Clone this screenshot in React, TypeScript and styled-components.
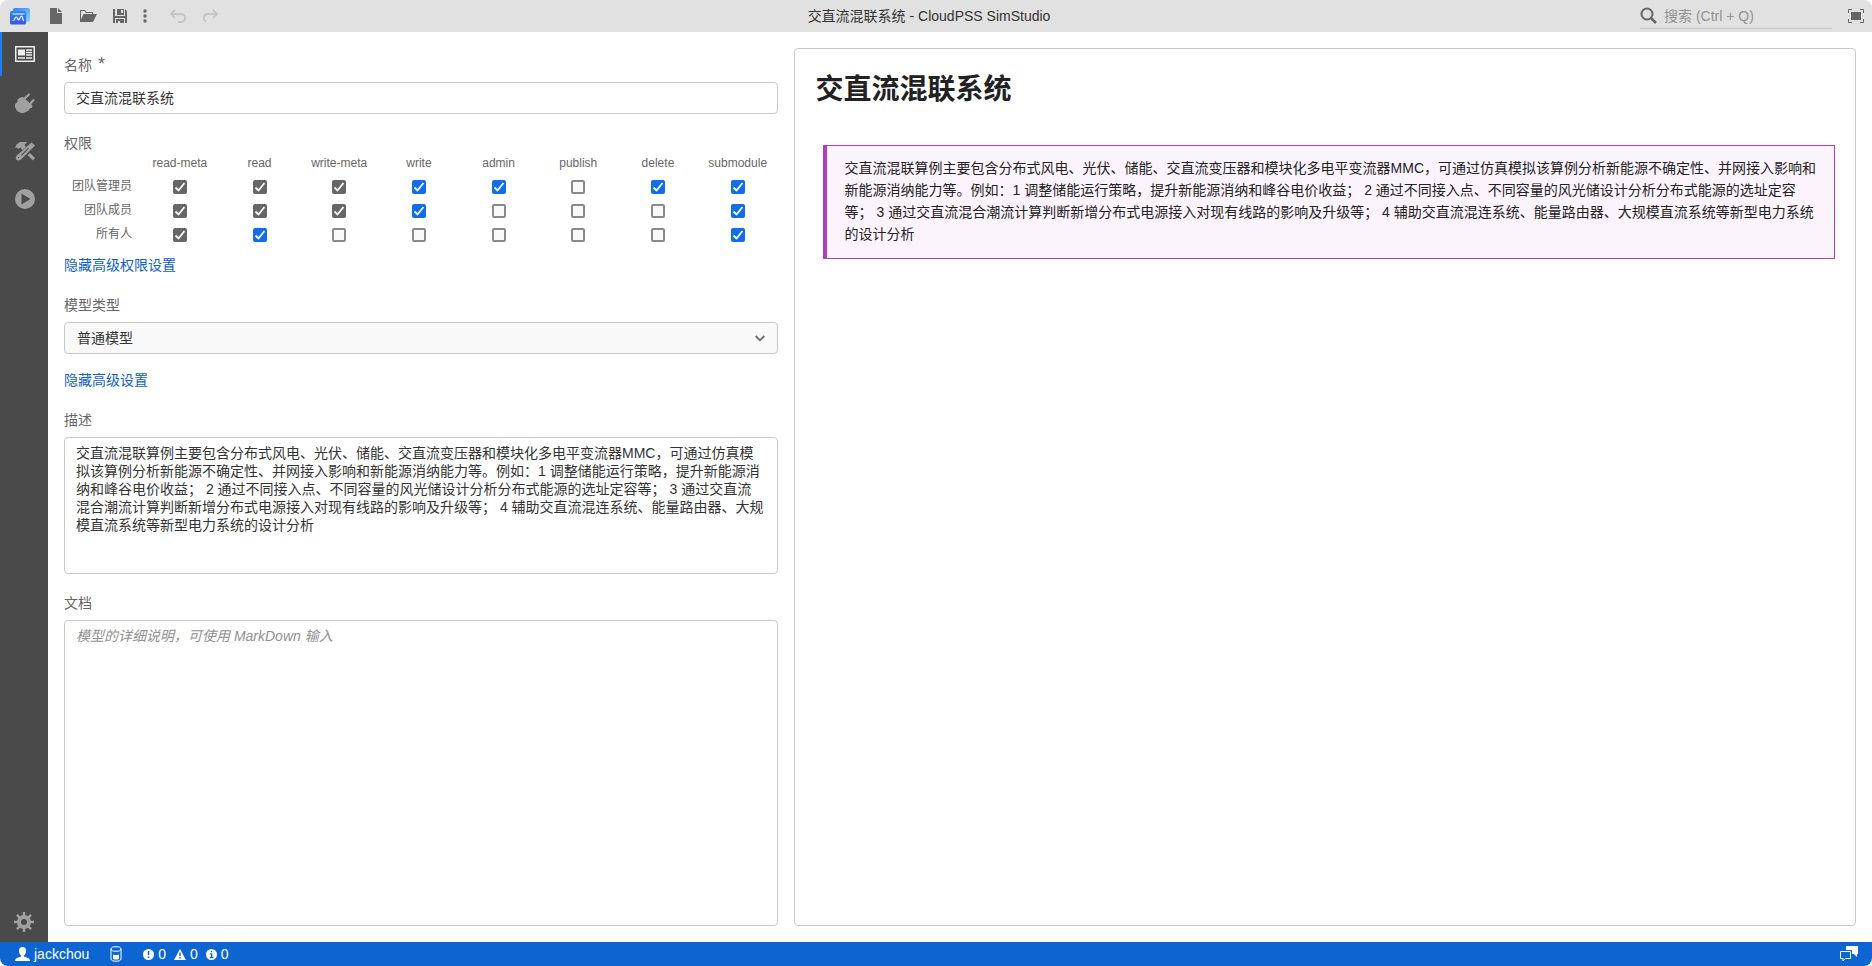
import React, { useState } from "react";
import styled, { createGlobalStyle } from "styled-components";

const GlobalStyle = createGlobalStyle`
  *, *::before, *::after { box-sizing: border-box; }
  html, body, #root { height: 100%; }
  body {
    margin: 0;
    background: #fff;
    color: #333;
    font-family: "Liberation Sans", "Noto Sans CJK SC", sans-serif;
    font-size: 14px;
    line-height: 20px;
  }
  button, input, select, textarea { font: inherit; color: inherit; margin: 0; }
  svg { display: block; }
`;

const Window = styled.div`
  display: flex;
  flex-direction: column;
  min-height: 100%;
  border-radius: 8px;
  overflow: hidden;
`;

const TitleBar = styled.header`
  display: grid;
  grid-template-columns: 1fr auto 1fr;
  align-items: center;
  height: 32px;
  padding: 0 8px 0 10px;
  background: #e1e1e1;
  color: #666;
`;

const Toolbar = styled.div`
  display: flex;
  align-items: center;
`;

const ToolButton = styled.button<{ $narrow?: boolean }>`
  display: flex;
  align-items: center;
  justify-content: center;
  width: ${(p) => (p.$narrow ? 18 : 32)}px;
  height: 32px;
  padding: 0;
  border: 0;
  background: none;
  color: #666;
  &:disabled { color: #c4c4c4; }
`;

const AppLogo = styled.div`
  margin-right: 10px;
`;

const UndoGroup = styled.div`
  display: flex;
  margin-left: 8px;
`;

const WindowTitle = styled.h1`
  margin: 0 16px 0 0;
  color: #333;
  font-size: 14px;
  font-weight: 400;
`;

const TitleRight = styled.div`
  display: flex;
  align-items: center;
  justify-content: flex-end;
  gap: 16px;
`;

const SearchBox = styled.label`
  display: flex;
  align-items: center;
  gap: 7px;
  width: 192px;
  height: 26px;
  border-bottom: 1px solid #c8c8c8;
`;

const SearchInput = styled.input`
  flex: 1;
  min-width: 0;
  padding: 0;
  border: 0;
  outline: 0;
  background: none;
  &::placeholder { color: #919191; opacity: 1; }
`;

const PlainButton = styled.button`
  padding: 0;
  border: 0;
  background: none;
`;

const Body = styled.div`
  display: flex;
  flex: 1;
`;

const SideBar = styled.nav`
  display: flex;
  flex-direction: column;
  width: 48px;
  background: #4a4a4a;
`;

const SideButton = styled.button<{ $active?: boolean }>`
  display: flex;
  align-items: center;
  justify-content: center;
  height: 44px;
  margin-bottom: ${(p) => (p.$active ? 5 : 4)}px;
  padding: 0;
  border: 0;
  border-left: 2px solid ${(p) => (p.$active ? "#1a7cf0" : "transparent")};
  background: none;
  color: ${(p) => (p.$active ? "#eee" : "#a0a0a0")};
`;

const SettingsButton = styled.button`
  display: flex;
  align-items: center;
  justify-content: center;
  height: 40px;
  margin-top: auto;
  padding: 0;
  border: 0;
  background: none;
  color: #a0a0a0;
`;

const Main = styled.main`
  display: flex;
  flex: 1;
  min-width: 0;
`;

const Form = styled.form`
  display: flex;
  flex-direction: column;
  gap: 12px;
  width: 40%;
  padding: 16px 0 16px 16px;
`;

const Field = styled.div<{ $grow?: boolean }>`
  display: flex;
  flex-direction: column;
  flex: ${(p) => (p.$grow ? "1" : "none")};
`;

const Label = styled.label`
  padding: 7px 0;
  color: #666;
`;

const GroupLabel = styled.div`
  padding-top: 7px;
  color: #666;
`;

const Required = styled.span`
  margin-left: 6px;
  font-size: 18px;
  line-height: 16px;
`;

const TextInput = styled.input`
  height: 32px;
  padding: 0 11px 3px;
  border: 1px solid #c8c8c8;
  border-radius: 4px;
  background: #fff;
`;

const TextArea = styled.textarea<{ $grow?: boolean }>`
  ${(p) => (p.$grow ? "flex: 1;" : "height: 137px;")}
  padding: 6px 13px 6px 11px;
  border: 1px solid #c8c8c8;
  border-radius: 4px;
  background: #fff;
  line-height: 18px;
  resize: none;
  &::placeholder { color: #919191; font-style: italic; opacity: 1; }
`;

const SelectWrap = styled.div`
  display: grid;
  align-items: center;
  & > * { grid-area: 1 / 1; }
  & > svg { justify-self: end; margin-right: 13px; pointer-events: none; color: #666; }
`;

const Select = styled.select`
  width: 100%;
  height: 32px;
  padding: 0 12px;
  border: 1px solid #c8c8c8;
  border-radius: 4px;
  background: #f9f9f9;
  appearance: none;
`;

const ToggleLink = styled.a`
  align-self: flex-start;
  padding: 4px 0 1px;
  color: #1060c9;
  text-decoration: none;
`;

const PermissionTable = styled.table`
  width: 100%;
  margin-bottom: 4px;
  border-collapse: collapse;
  table-layout: fixed;
  color: #666;
  font-size: 12px;
  line-height: 16px;
  th { padding: 0; font-weight: 400; }
  td { height: 24px; padding: 0; }
  thead th { height: 22px; padding: 2px 0 4px; }
  thead th:first-child { width: 76px; }
  tbody th { padding: 0 8px 2px 0; text-align: right; }
`;

const CheckCell = styled.label`
  display: grid;
  justify-content: center;
  & > * { grid-area: 1 / 1; }
  & > svg { color: #fff; pointer-events: none; }
`;

const CheckBox = styled.input`
  appearance: none;
  width: 14px;
  height: 14px;
  border: 2px solid #8a8a8a;
  border-radius: 2px;
  background: #f9f9f9;
  &:checked { border: 0; background: #106ee6; }
  &:checked:disabled { background: #666; }
`;

const PreviewPane = styled.section`
  display: flex;
  width: 60%;
  padding: 16px;
`;

const Preview = styled.article`
  flex: 1;
  padding: 20px 20px 20px 21px;
  border: 1px solid #c8c8c8;
  border-radius: 4px;
  color: #222;
`;

const DocTitle = styled.h2`
  margin: 0 0 34px;
  font-size: 28px;
  font-weight: 700;
  line-height: 42px;
`;

const Callout = styled.blockquote`
  margin: 0 0 0 7px;
  padding: 11px 16px 13px 18px;
  border: 1px solid #ad3fbb;
  border-left-width: 4px;
  background: #fcf4fc;
  line-height: 22px;
`;

const StatusBar = styled.footer`
  display: flex;
  align-items: center;
  height: 24px;
  padding: 0 14px 0 15px;
  background: #0c65d1;
  color: #fff;
`;

const StatusItem = styled.button`
  display: flex;
  align-items: center;
  gap: 4px;
  margin-right: 21px;
  padding: 0;
  border: 0;
  background: none;
`;

const Counter = styled.span`
  display: flex;
  align-items: center;
  gap: 4px;
  & + & { margin-left: 4px; }
`;

const StatusEnd = styled(PlainButton)`
  margin-left: auto;
`;

const LogoIcon = () => (
  <svg width="20" height="18" viewBox="0 0 20 18">
    <defs>
      <linearGradient id="logoBack" x1="0" y1="0" x2="1" y2="1">
        <stop offset="0" stopColor="#3d7cf0" />
        <stop offset="1" stopColor="#8ad8fa" />
      </linearGradient>
      <linearGradient id="logoFront" x1="0" y1="0" x2="0" y2="1">
        <stop offset="0" stopColor="#2b8af5" />
        <stop offset="1" stopColor="#3a52ea" />
      </linearGradient>
    </defs>
    <rect x="3" y="1" width="17" height="14" rx="2" fill="url(#logoBack)" />
    <rect x="0" y="4" width="16" height="13.500" rx="1.500" fill="url(#logoFront)" />
    <path d="M2.500 7h12M2.500 13.500L4 13c1-.4 1-3 2.300-3S7.500 13 8.700 13 10 9 11.500 9s.7 4 2.500 5" fill="none" stroke="#fff" strokeWidth="1.200" />
  </svg>
);

const NewIcon = () => (
  <svg width="14" height="16" viewBox="0 0 14 16" fill="currentColor">
    <path d="M1 0h7v5h5v11H1zM9 0l4 4H9z" />
  </svg>
);

const OpenIcon = () => (
  <svg width="18" height="16" viewBox="0 0 18 16" fill="currentColor">
    <path d="M1 14V2h5l1.500 2H14v3h-1V5H7L5.500 3H2v8.500L4.500 6H18l-4 8z" />
  </svg>
);

const SaveIcon = () => (
  <svg width="16" height="16" viewBox="0 0 16 16" fill="currentColor">
    <path fillRule="evenodd" d="M1 1h2v7h10V1l2 2v12h-2v-5H3v5H1zM5 1h7v6H5zm4 1v3h2V2zM4 11h8v4H8v-2H6v2H4z" />
  </svg>
);

const MoreIcon = () => (
  <svg width="4" height="14" viewBox="0 0 4 14" fill="currentColor">
    <circle cx="2" cy="2" r="1.700" />
    <circle cx="2" cy="7" r="1.700" />
    <circle cx="2" cy="12" r="1.700" />
  </svg>
);

const UndoIcon = ({ flip }: { flip?: boolean }) => (
  <svg width="16" height="14" viewBox="0 0 16 14" fill="none" stroke="currentColor" strokeWidth="1.800">
    <path d={flip ? "M11 1l4 4-4 4M15 5H5a4 4 0 0 0-1 7.500" : "M5 1L1 5l4 4M1 5h10a4 4 0 0 1 0 8H8"} />
  </svg>
);

const SearchIcon = () => (
  <svg width="17" height="17" viewBox="0 0 17 17" fill="none" stroke="#666" strokeWidth="2">
    <circle cx="7" cy="7" r="5.500" />
    <path d="M11 11l5 5" strokeWidth="2.500" />
  </svg>
);

const FullScreenIcon = () => (
  <svg width="16" height="14" viewBox="0 0 16 14" fill="none" stroke="#666">
    <path d="M.5 4V.5H4M12 .5h3.500V4M15.500 10v3.500H12M4 13.500H.5V10" />
    <rect x="3" y="3" width="10" height="8" fill="#666" stroke="none" />
  </svg>
);

const OverviewIcon = () => (
  <svg width="20" height="16" viewBox="0 0 20 16">
    <rect x=".750" y=".750" width="18.500" height="14.500" fill="none" stroke="currentColor" strokeWidth="1.500" />
    <rect x="3" y="3.500" width="7" height="6" fill="currentColor" />
    <path d="M11 4h6M11 6.500h6M11 9h6M3 12h7M11 12h6" stroke="currentColor" strokeWidth="1.300" />
  </svg>
);

const PlugIcon = () => (
  <svg width="20" height="20" viewBox="0 0 20 20" fill="currentColor">
    <path d="M5 4.500L8 4l9.500 8.500-.5 2.500h-1.500L13 18l-4.500 2H6l-4-2-2-4V11l2.500-2V6.500z" />
    <path d="M9 6l5.500-5M14.500 11.500L19 6.500" stroke="currentColor" strokeWidth="2.200" />
  </svg>
);

const ToolsIcon = () => (
  <svg width="20" height="20" viewBox="0 0 20 20" fill="currentColor">
    <path d="M0 7l1.500-3.500L5 1h7l-1.500 2L9.500 4l1.500 2-3.500 3-2-2.500L3 8 2 6.500z" />
    <path d="M12.500 14l2.500-2 5 5-2 2.500z" />
    <path fillRule="evenodd" d="M16.500 1.500l3.500 3L6.500 18c-1 1.500-4 2-5.200.8-1-1.200-.5-3.800 1-4.800zM3 16v1h1v-1zM6 14l.7.7 7-7-.7-.7z" />
  </svg>
);

const PlayIcon = () => (
  <svg width="20" height="20" viewBox="0 0 20 20" fill="currentColor">
    <path fillRule="evenodd" d="M10 0a10 10 0 1 1 0 20a10 10 0 0 1 0-20zM6.500 4.500v11l9-5.500z" />
  </svg>
);

const GearIcon = () => (
  <svg width="20" height="20" viewBox="0 0 20 20" fill="none" stroke="currentColor">
    <circle cx="10" cy="10" r="5" strokeWidth="4" />
    <path
      d="M10 0v4M10 16v4M0 10h4M16 10h4M2.900 2.900l3 3M14.100 14.100l3 3M17.100 2.900l-3 3M5.900 14.100l-3 3"
      strokeWidth="2.400"
    />
  </svg>
);

const ChevronIcon = () => (
  <svg width="10" height="7" viewBox="0 0 10 7" fill="none" stroke="currentColor" strokeWidth="1.800">
    <path d="M.7 1L5 5.300 9.300 1" />
  </svg>
);

const TickIcon = () => (
  <svg width="14" height="14" viewBox="0 0 14 14" fill="none" stroke="currentColor" strokeWidth="1.800">
    <path d="M2.500 7.500L5.500 10.500 11.500 3" />
  </svg>
);

const UserIcon = () => (
  <svg width="15" height="14" viewBox="0 0 15 14" fill="currentColor">
    <path d="M7.500 0C10 0 11 1.500 11 4c0 2-1 3.500-2 4.500v1l4 1.500c1.500.5 2 1.500 2 3H0c0-1.500.5-2.500 2-3l4-1.500v-1C5 7.500 4 6 4 4c0-2.500 1-4 3.500-4z" />
  </svg>
);

const StorageIcon = () => (
  <svg width="12" height="16" viewBox="0 0 12 16" fill="none" stroke="currentColor">
    <ellipse cx="6" cy="3" rx="5" ry="2.300" />
    <path d="M1 3v10c0 3 10 3 10 0V3" />
    <path d="M3 8.500q3 1.200 6 0v4.500q-3 1.200-6 0z" fill="currentColor" stroke="none" />
  </svg>
);

const ErrorIcon = () => (
  <svg width="11" height="11" viewBox="0 0 11 11">
    <circle cx="5.500" cy="5.500" r="5.500" fill="currentColor" />
    <path d="M5.500 2v4M5.500 7.500V9" stroke="#0c65d1" strokeWidth="1.600" />
  </svg>
);

const WarningIcon = () => (
  <svg width="12" height="11" viewBox="0 0 12 11">
    <path d="M6 0l6 11H0z" fill="currentColor" />
    <path d="M6 3.500v3.500M6 8v1.500" stroke="#0c65d1" strokeWidth="1.400" />
  </svg>
);

const InfoIcon = () => (
  <svg width="11" height="11" viewBox="0 0 11 11">
    <circle cx="5.500" cy="5.500" r="5.500" fill="currentColor" />
    <path d="M5.500 1.800v1.500M4 4.800h1.700v3.700M3.800 8.500h3.600" fill="none" stroke="#0c65d1" strokeWidth="1.300" />
  </svg>
);

const ChatIcon = () => (
  <svg width="18" height="16" viewBox="0 0 18 16">
    <path d="M6 0h12v8h-1v3l-3-3H12V4H6z" fill="currentColor" />
    <path d="M.5 5.500h10v7H5.500L3 15v-2.500H.5z" fill="none" stroke="currentColor" />
  </svg>
);

const PERMISSIONS = ["read-meta", "read", "write-meta", "write", "admin", "publish", "delete", "submodule"];

/* "x": granted and locked, "1": granted, "0": not granted */
const ROLES = [
  { name: "团队管理员", grants: "xxx11011" },
  { name: "团队成员", grants: "xxx10001" },
  { name: "所有人", grants: "x1000001" },
];

const NAME = "交直流混联系统";
const DESCRIPTION =
  "交直流混联算例主要包含分布式风电、光伏、储能、交直流变压器和模块化多电平变流器MMC，可通过仿真模拟该算例分析新能源不确定性、并网接入影响和新能源消纳能力等。例如：1 调整储能运行策略，提升新能源消纳和峰谷电价收益； 2 通过不同接入点、不同容量的风光储设计分析分布式能源的选址定容等； 3 通过交直流混合潮流计算判断新增分布式电源接入对现有线路的影响及升级等； 4 辅助交直流混连系统、能量路由器、大规模直流系统等新型电力系统的设计分析";

function Permission({ label, state }: { label: string; state: string }) {
  const [checked, setChecked] = useState(state !== "0");
  return (
    <CheckCell>
      <CheckBox
        type="checkbox"
        aria-label={label}
        checked={checked}
        disabled={state === "x"}
        onChange={(e) => setChecked(e.target.checked)}
      />
      {checked && <TickIcon />}
    </CheckCell>
  );
}

export default function App() {
  const [name, setName] = useState(NAME);
  const [description, setDescription] = useState(DESCRIPTION);

  return (
    <>
      <GlobalStyle />
      <Window>
        <TitleBar>
          <Toolbar>
            <AppLogo><LogoIcon /></AppLogo>
            <ToolButton aria-label="新建"><NewIcon /></ToolButton>
            <ToolButton aria-label="打开"><OpenIcon /></ToolButton>
            <ToolButton aria-label="保存"><SaveIcon /></ToolButton>
            <ToolButton $narrow aria-label="更多"><MoreIcon /></ToolButton>
            <UndoGroup>
              <ToolButton disabled aria-label="撤销"><UndoIcon /></ToolButton>
              <ToolButton disabled aria-label="重做"><UndoIcon flip /></ToolButton>
            </UndoGroup>
          </Toolbar>
          <WindowTitle>{NAME} - CloudPSS SimStudio</WindowTitle>
          <TitleRight>
            <SearchBox>
              <SearchIcon />
              <SearchInput aria-label="搜索" placeholder="搜索 (Ctrl + Q)" />
            </SearchBox>
            <PlainButton aria-label="全屏"><FullScreenIcon /></PlainButton>
          </TitleRight>
        </TitleBar>

        <Body>
          <SideBar>
            <SideButton $active aria-label="总览"><OverviewIcon /></SideButton>
            <SideButton aria-label="接口"><PlugIcon /></SideButton>
            <SideButton aria-label="实现"><ToolsIcon /></SideButton>
            <SideButton aria-label="运行"><PlayIcon /></SideButton>
            <SettingsButton aria-label="设置"><GearIcon /></SettingsButton>
          </SideBar>

          <Main>
            <Form>
              <Field>
                <Label htmlFor="name">名称<Required>*</Required></Label>
                <TextInput id="name" required value={name} onChange={(e) => setName(e.target.value)} />
              </Field>

              <Field>
                <GroupLabel>权限</GroupLabel>
                <PermissionTable>
                  <thead>
                    <tr>
                      <th />
                      {PERMISSIONS.map((p) => <th key={p} scope="col">{p}</th>)}
                    </tr>
                  </thead>
                  <tbody>
                    {ROLES.map((role) => (
                      <tr key={role.name}>
                        <th scope="row">{role.name}</th>
                        {PERMISSIONS.map((p, i) => (
                          <td key={p}><Permission label={`${role.name} ${p}`} state={role.grants[i]} /></td>
                        ))}
                      </tr>
                    ))}
                  </tbody>
                </PermissionTable>
                <ToggleLink href="#permissions">隐藏高级权限设置</ToggleLink>
              </Field>

              <Field>
                <Label htmlFor="type">模型类型</Label>
                <SelectWrap>
                  <Select id="type"><option>普通模型</option></Select>
                  <ChevronIcon />
                </SelectWrap>
              </Field>

              <Field>
                <ToggleLink href="#advanced">隐藏高级设置</ToggleLink>
              </Field>

              <Field>
                <Label htmlFor="description">描述</Label>
                <TextArea id="description" value={description} onChange={(e) => setDescription(e.target.value)} />
              </Field>

              <Field $grow>
                <Label htmlFor="document">文档</Label>
                <TextArea id="document" $grow placeholder="模型的详细说明，可使用 MarkDown 输入" />
              </Field>
            </Form>

            <PreviewPane>
              <Preview>
                <DocTitle>{name}</DocTitle>
                <Callout>{description}</Callout>
              </Preview>
            </PreviewPane>
          </Main>
        </Body>

        <StatusBar>
          <StatusItem><UserIcon />jackchou</StatusItem>
          <StatusItem aria-label="存储"><StorageIcon /></StatusItem>
          <StatusItem>
            <Counter><ErrorIcon />0</Counter>
            <Counter><WarningIcon />0</Counter>
            <Counter><InfoIcon />0</Counter>
          </StatusItem>
          <StatusEnd aria-label="消息"><ChatIcon /></StatusEnd>
        </StatusBar>
      </Window>
    </>
  );
}
